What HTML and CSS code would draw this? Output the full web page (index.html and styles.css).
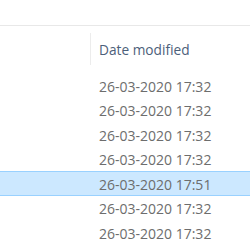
FILE: index.html
```html
<!DOCTYPE html>
<html lang="en">
<head>
	<meta charset="UTF-8">
	<title>Date modified</title>
	<link rel="stylesheet" href="styles.css">
</head>
<body>
	<div class="toolbar"></div>
	<div class="header">
		<div class="col-head">Date modified</div>
	</div>
	<div class="list">
		<div class="row">26-03-2020 17:32</div>
		<div class="row">26-03-2020 17:32</div>
		<div class="row">26-03-2020 17:32</div>
		<div class="row">26-03-2020 17:32</div>
		<div class="row selected">26-03-2020 17:51</div>
		<div class="row">26-03-2020 17:32</div>
		<div class="row">26-03-2020 17:32</div>
	</div>
</body>
</html>
```

FILE: styles.css
```css
body {
	margin: 0;
	background: #fff;
	font-family: "Open Sans", "Noto Sans", sans-serif;
	overflow: hidden;
}
.toolbar {
	height: 25px;
	border-bottom: 1px solid #e8e8e8;
}
.header {
	display: flex;
	height: 47px;
	padding-left: 90px;
}
.col-head {
	margin-top: 7px;
	height: 32px;
	line-height: 34px;
	padding-left: 8px;
	border-left: 1px solid #ececec;
	font-size: 13.7px;
	color: #4c607a;
}
.row {
	box-sizing: border-box;
	height: 24.6px;
	line-height: 24.6px;
	padding-left: 99px;
	padding-top: 1.5px;
	font-size: 14px;
	color: #6d6d6d;
	white-space: nowrap;
}
.selected {
	background: #cce8ff;
	border-top: 1px solid #99d1ff;
	border-bottom: 1px solid #99d1ff;
	line-height: 22.6px;
}
```
